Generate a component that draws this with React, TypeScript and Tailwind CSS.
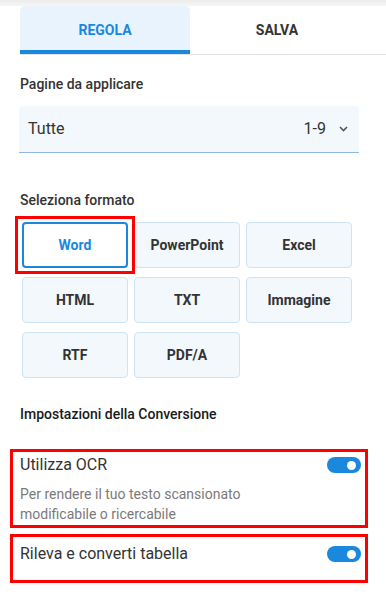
import React from 'react';

const formats = ['Word', 'PowerPoint', 'Excel', 'HTML', 'TXT', 'Immagine', 'RTF', 'PDF/A'];

const Toggle = () => (
  <div className="relative h-[16px] w-[34px] rounded-full bg-[#1a88dc]">
    <div className="absolute right-[5px] top-[3.5px] h-[9px] w-[9px] rounded-full bg-white" />
  </div>
);

const App: React.FC = () => {
  return (
    <div
      className="h-[592px] w-[386px] overflow-hidden bg-white text-[#333]"
      style={{ fontFamily: 'Roboto, "Noto Sans", sans-serif' }}
    >
      <div className="h-[6px] bg-gradient-to-b from-[#ececec] to-[#f6f6f6]" />

      {/* tabs */}
      <div className="ml-[20px] flex border-b border-[#e3e3e3]">
        <div className="flex h-[48px] w-[170px] items-center justify-center rounded-t-[5px] border-b-[4px] border-[#1a88dc] bg-[#e8f3fd] pt-[4px] text-[14px] font-bold text-[#1a88dc]">
          REGOLA
        </div>
        <div className="flex h-[48px] w-[174px] items-center justify-center text-[14px] font-bold text-[#333]">
          SALVA
        </div>
      </div>

      <div className="px-[20px]">
        <div className="mt-[19px] text-[14px] font-medium leading-[20px] text-[#333]">Pagine da applicare</div>

        {/* select */}
        <div className="-ml-px mt-[12px] flex h-[47px] w-[340px] items-center justify-between rounded-t-[3px] border-b border-[#8fb9e3] bg-[#f3f8fc] pl-[9px] pr-[11px] text-[16px] text-[#333]">
          <span>Tutte</span>
          <div className="flex items-center gap-[13px]">
            <span>1-9</span>
            <svg width="9" height="6" viewBox="0 0 9 6" fill="none">
              <polyline points="1,1 4.5,4.5 8,1" stroke="#555" strokeWidth="1.6" />
            </svg>
          </div>
        </div>

        <div className="mt-[37px] text-[14px] font-medium leading-[20px] text-[#333]">Seleziona formato</div>

        {/* format grid */}
        <div className="ml-[2px] mt-[12px] grid w-[330px] grid-cols-3 gap-x-[6px] gap-y-[9px]">
          {formats.map((f, i) =>
            i === 0 ? (
              <div key={f} className="relative">
                <div className="flex h-[46px] items-center justify-center rounded-[4px] border-2 border-[#1a88dc] bg-white text-[14px] font-bold text-[#1a88dc]">
                  {f}
                </div>
                <div className="pointer-events-none absolute -inset-x-[7px] -inset-y-[6px] border-[3px] border-[#ff0000]" />
              </div>
            ) : (
              <div
                key={f}
                className="flex h-[46px] items-center justify-center rounded-[4px] border border-[#cfe3f5] bg-[#f3f8fc] text-[14px] font-bold text-[#333]"
              >
                {f}
              </div>
            )
          )}
        </div>

        <div className="mt-[26px] text-[14px] font-medium leading-[20px] text-[#1a1a1a]">
          Impostazioni della Conversione
        </div>
      </div>

      {/* options (red boxes are annotations in the picture) */}
      <div className="mx-[10px] mt-[25px] w-[358px] border-[3px] border-[#ff0000] pb-[1px] pl-[7px] pr-[4px] pt-[1px]">
        <div className="flex h-[24px] items-center justify-between">
          <span className="text-[16px] text-[#333]">Utilizza OCR</span>
          <Toggle />
        </div>
        <div className="mt-[7px] text-[14px] leading-[20px] text-[#7a7a7a]">
          Per rendere il tuo testo scansionato
          <br />
          modificabile o ricercabile
        </div>
      </div>

      <div className="mx-[10px] mt-[6px] h-[49px] w-[358px] border-[3px] border-[#ff0000] pl-[7px] pr-[4px] pt-[5px]">
        <div className="flex h-[24px] items-center justify-between">
          <span className="text-[16px] text-[#333]">Rileva e converti tabella</span>
          <Toggle />
        </div>
      </div>
    </div>
  );
};

export default App;
